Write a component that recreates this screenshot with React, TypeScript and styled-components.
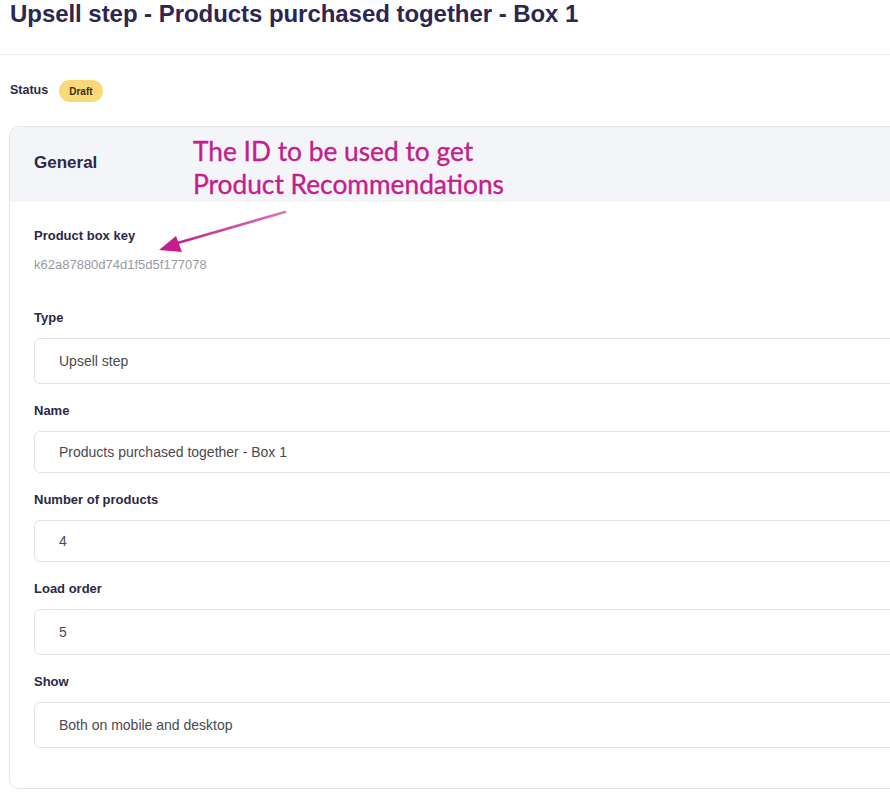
import React from "react";
import styled, { createGlobalStyle } from "styled-components";

const Global = createGlobalStyle`
  html, body { margin: 0; padding: 0; background: #ffffff; overflow: hidden; }
  body { font-family: "Liberation Sans", Arial, sans-serif; }
  * { box-sizing: border-box; }
`;

const Page = styled.div`
  width: 1200px;
  position: relative;
`;

const TopBar = styled.header`
  height: 55px;
  padding: 0 10px;
  border-bottom: 1px solid #efeff1;
`;

const Title = styled.h1`
  margin: 0;
  font-size: 24px;
  line-height: 28px;
  font-weight: 700;
  color: #2c2650;
  letter-spacing: -0.05px;
`;

const Content = styled.main`
  padding: 25px 9px 0 9px;
  position: relative;
`;

const StatusRow = styled.div`
  display: flex;
  align-items: center;
  gap: 11px;
  height: 22px;
  padding-left: 1px;
`;

const StatusLabel = styled.span`
  font-size: 12.5px;
  font-weight: 700;
  color: #2c2847;
  margin-top: -3px;
`;

const Badge = styled.span`
  display: inline-flex;
  align-items: center;
  height: 22px;
  padding: 0 10px;
  border-radius: 11px;
  background: #f9d978;
  color: #3b2f12;
  font-size: 10px;
  font-weight: 700;
`;

const Card = styled.section`
  margin-top: 24px;
  border: 1px solid #e4e4e8;
  border-radius: 10px;
  overflow: hidden;
  background: #fff;
`;

const CardHeader = styled.div`
  height: 75px;
  background: #f4f5f9;
  display: flex;
  align-items: center;
  padding: 0 24px 4px 24px;
`;

const CardTitle = styled.h2`
  margin: 0;
  font-size: 17px;
  font-weight: 700;
  color: #2c2847;
`;

const CardBody = styled.div`
  padding: 26px 24px 40px 24px;
  display: flex;
  flex-direction: column;
`;

const Field = styled.div<{ $gap?: number }>`
  display: flex;
  flex-direction: column;
  margin-top: ${(p) => p.$gap ?? 19}px;
  &:first-child { margin-top: 0; }
`;

const Label = styled.label<{ $mb?: number }>`
  font-size: 13px;
  line-height: 16px;
  font-weight: 700;
  color: #2c2847;
  margin-bottom: ${(p) => p.$mb ?? 12}px;
`;

const KeyValue = styled.div`
  font-size: 13px;
  line-height: 16px;
  color: #9a9a9f;
`;

const Input = styled.div<{ $h: number }>`
  height: ${(p) => p.$h}px;
  border: 1px solid #e3e3e6;
  border-radius: 6px;
  display: flex;
  align-items: center;
  padding: 0 24px;
  font-size: 14px;
  color: #4a4a4e;
  background: #fff;
`;

const Note = styled.div`
  position: absolute;
  left: 193px;
  top: 135px;
  font-family: Lato, "Noto Sans", sans-serif;
  font-size: 26.3px;
  line-height: 33px;
  color: #c41e8c;
  -webkit-text-stroke: 0.35px #c41e8c;
  pointer-events: none;
`;

const Arrow = styled.svg`
  position: absolute;
  left: 150px;
  top: 205px;
  pointer-events: none;
`;

const fields = [
  { label: "Type", value: "Upsell step", h: 46 },
  { label: "Name", value: "Products purchased together - Box 1", h: 42 },
  { label: "Number of products", value: "4", h: 42 },
  { label: "Load order", value: "5", h: 46 },
  { label: "Show", value: "Both on mobile and desktop", h: 46 },
];

export default function App() {
  return (
    <>
      <Global />
      <Page>
        <TopBar>
          <Title>Upsell step - Products purchased together - Box 1</Title>
        </TopBar>
        <Content>
          <StatusRow>
            <StatusLabel>Status</StatusLabel>
            <Badge>Draft</Badge>
          </StatusRow>
          <Card>
            <CardHeader>
              <CardTitle>General</CardTitle>
            </CardHeader>
            <CardBody>
              <Field>
                <Label $mb={13}>Product box key</Label>
                <KeyValue>k62a87880d74d1f5d5f177078</KeyValue>
              </Field>
              {fields.map((f, i) => (
                <Field key={f.label} $gap={i === 0 ? 37 : 19}>
                  <Label>{f.label}</Label>
                  <Input $h={f.h}>{f.value}</Input>
                </Field>
              ))}
            </CardBody>
          </Card>
        </Content>
        <Note>
          The ID to be used to get
          <br />
          Product Recommendations
        </Note>
        <Arrow width="145" height="55" viewBox="0 0 145 55">
          <defs>
            <linearGradient id="ag" x1="1" y1="0" x2="0" y2="1">
              <stop offset="0" stopColor="#d77ab6" />
              <stop offset="1" stopColor="#c41e8c" />
            </linearGradient>
          </defs>
          <line x1="135" y1="7" x2="24" y2="39" stroke="url(#ag)" strokeWidth="2.6" strokeLinecap="round" />
          <polygon points="9,45 26,31 32,47" fill="#c41e8c" />
        </Arrow>
      </Page>
    </>
  );
}
